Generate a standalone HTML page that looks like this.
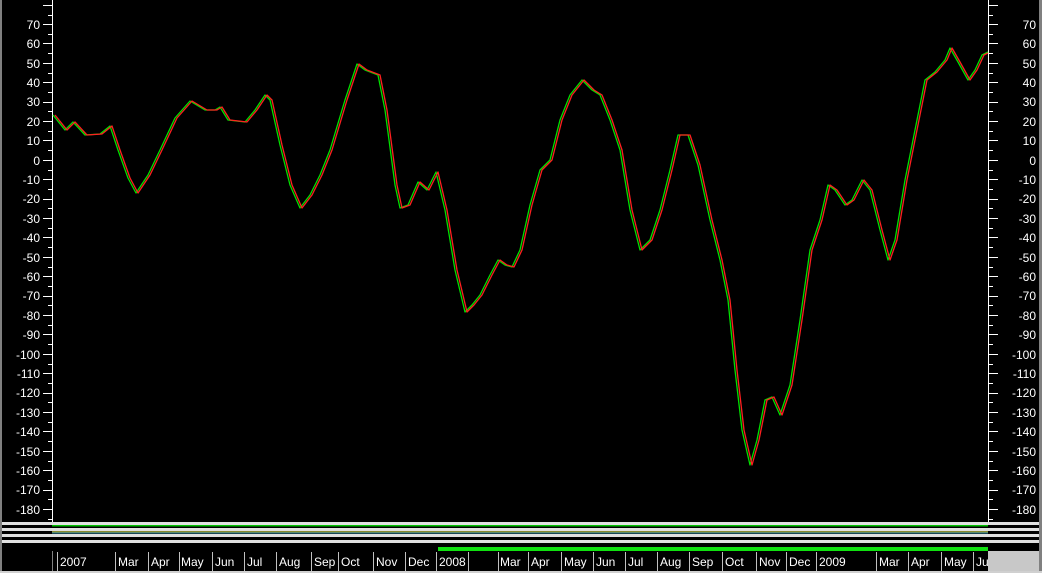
<!DOCTYPE html>
<html><head><style>
html,body{margin:0;padding:0;background:#000;}
svg{display:block;}
text{font-family:"Liberation Sans",Arial,sans-serif;font-size:12px;fill:#fff;}
</style></head><body>
<svg width="1042" height="573" viewBox="0 0 1042 573" xmlns="http://www.w3.org/2000/svg">
<rect width="1042" height="573" fill="#000"/>
<rect x="0" y="0" width="2" height="573" fill="#808080"/>
<rect x="1039" y="0" width="3" height="573" fill="#808080"/>
<line x1="52.5" y1="0" x2="52.5" y2="522" stroke="#fff"/>
<line x1="988.5" y1="0" x2="988.5" y2="522" stroke="#fff"/>
<g id="ticks" stroke="#fff">
<path d="M43 5.5H52M48 15.5H52M43 24.5H52M48 34.5H52M43 43.5H52M48 53.5H52M43 63.5H52M48 73.5H52M43 82.5H52M48 92.5H52M43 102.5H52M48 111.5H52M43 121.5H52M48 131.5H52M43 140.5H52M48 150.5H52M43 160.5H52M48 170.5H52M43 179.5H52M48 189.5H52M43 199.5H52M48 208.5H52M43 218.5H52M48 228.5H52M43 237.5H52M48 247.5H52M43 257.5H52M48 267.5H52M43 276.5H52M48 286.5H52M43 296.5H52M48 305.5H52M43 315.5H52M48 325.5H52M43 334.5H52M48 344.5H52M43 354.5H52M48 364.5H52M43 373.5H52M48 383.5H52M43 393.5H52M48 402.5H52M43 412.5H52M48 422.5H52M43 431.5H52M48 441.5H52M43 451.5H52M48 461.5H52M43 470.5H52M48 480.5H52M43 490.5H52M48 499.5H52M43 509.5H52M48 519.5H52"/>
<path transform="translate(1041,0) scale(-1,1)" d="M43 5.5H52M48 15.5H52M43 24.5H52M48 34.5H52M43 43.5H52M48 53.5H52M43 63.5H52M48 73.5H52M43 82.5H52M48 92.5H52M43 102.5H52M48 111.5H52M43 121.5H52M48 131.5H52M43 140.5H52M48 150.5H52M43 160.5H52M48 170.5H52M43 179.5H52M48 189.5H52M43 199.5H52M48 208.5H52M43 218.5H52M48 228.5H52M43 237.5H52M48 247.5H52M43 257.5H52M48 267.5H52M43 276.5H52M48 286.5H52M43 296.5H52M48 305.5H52M43 315.5H52M48 325.5H52M43 334.5H52M48 344.5H52M43 354.5H52M48 364.5H52M43 373.5H52M48 383.5H52M43 393.5H52M48 402.5H52M43 412.5H52M48 422.5H52M43 431.5H52M48 441.5H52M43 451.5H52M48 461.5H52M43 470.5H52M48 480.5H52M43 490.5H52M48 499.5H52M43 509.5H52M48 519.5H52"/>
</g>
<g text-anchor="end">
<text x="40" y="29">70</text><text x="40" y="48">60</text><text x="40" y="68">50</text><text x="40" y="87">40</text><text x="40" y="106">30</text><text x="40" y="126">20</text><text x="40" y="145">10</text><text x="40" y="165">0</text><text x="40" y="184">-10</text><text x="40" y="203">-20</text><text x="40" y="223">-30</text><text x="40" y="242">-40</text><text x="40" y="262">-50</text><text x="40" y="281">-60</text><text x="40" y="300">-70</text><text x="40" y="320">-80</text><text x="40" y="339">-90</text><text x="40" y="359">-100</text><text x="40" y="378">-110</text><text x="40" y="397">-120</text><text x="40" y="417">-130</text><text x="40" y="436">-140</text><text x="40" y="456">-150</text><text x="40" y="475">-160</text><text x="40" y="494">-170</text><text x="40" y="514">-180</text>
</g>
<g text-anchor="end">
<text x="1036" y="29">70</text><text x="1036" y="48">60</text><text x="1036" y="68">50</text><text x="1036" y="87">40</text><text x="1036" y="106">30</text><text x="1036" y="126">20</text><text x="1036" y="145">10</text><text x="1036" y="165">0</text><text x="1036" y="184">-10</text><text x="1036" y="203">-20</text><text x="1036" y="223">-30</text><text x="1036" y="242">-40</text><text x="1036" y="262">-50</text><text x="1036" y="281">-60</text><text x="1036" y="300">-70</text><text x="1036" y="320">-80</text><text x="1036" y="339">-90</text><text x="1036" y="359">-100</text><text x="1036" y="378">-110</text><text x="1036" y="397">-120</text><text x="1036" y="417">-130</text><text x="1036" y="436">-140</text><text x="1036" y="456">-150</text><text x="1036" y="475">-160</text><text x="1036" y="494">-170</text><text x="1036" y="514">-180</text>
</g>
<g fill="none" stroke-width="1.3" stroke-linejoin="round">
<polyline stroke="#00e000" points="53,115 65,130 73,122 85,135 100,134 110,126 118,150 128,178 136,193 148,175 160,150 175,118 190,101 205,110 215,110 220,107 228,120 245,122 255,110 265,95 270,100 280,145 290,185 300,208 310,195 320,175 330,150 345,100 357,64 365,70 378,75 385,110 395,185 400,208 408,205 418,182 427,190 436,172 445,210 455,270 465,312 472,305 480,295 490,275 498,260 505,265 512,267 520,250 530,205 540,170 550,160 560,120 570,95 582,80 592,90 600,95 610,120 620,150 630,210 640,250 650,240 660,210 670,170 678,135 688,135 698,165 710,220 720,260 728,300 735,370 742,430 750,465 757,440 765,400 772,397 780,415 790,385 800,320 810,250 820,220 828,185 835,190 845,205 852,200 862,180 870,190 880,230 888,260 895,240 905,180 915,130 925,80 935,72 945,60 950,48 958,62 968,80 975,70 982,55 988,52"/>
<polyline transform="translate(2,0)" stroke="#ff2020" points="53,115 65,130 73,122 85,135 100,134 110,126 118,150 128,178 136,193 148,175 160,150 175,118 190,101 205,110 215,110 220,107 228,120 245,122 255,110 265,95 270,100 280,145 290,185 300,208 310,195 320,175 330,150 345,100 357,64 365,70 378,75 385,110 395,185 400,208 408,205 418,182 427,190 436,172 445,210 455,270 465,312 472,305 480,295 490,275 498,260 505,265 512,267 520,250 530,205 540,170 550,160 560,120 570,95 582,80 592,90 600,95 610,120 620,150 630,210 640,250 650,240 660,210 670,170 678,135 688,135 698,165 710,220 720,260 728,300 735,370 742,430 750,465 757,440 765,400 772,397 780,415 790,385 800,320 810,250 820,220 828,185 835,190 845,205 852,200 862,180 870,190 880,230 888,260 895,240 905,180 915,130 925,80 935,72 945,60 950,48 958,62 968,80 975,70 982,55 986,53"/>
</g>
<rect x="2" y="522" width="1037" height="3" fill="#e0e0e0"/>
<rect x="52" y="525" width="936" height="1.5" fill="#00c000"/>
<rect x="2" y="528" width="1037" height="3" fill="#e0e0e0"/>
<rect x="52" y="531" width="936" height="1.5" fill="#8a8a30"/>
<rect x="52" y="532.5" width="936" height="1" fill="#3090b0"/>
<rect x="2" y="534" width="1037" height="3" fill="#e0e0e0"/>
<rect x="2" y="540" width="1037" height="3" fill="#e0e0e0"/>
<rect x="438" y="547" width="550" height="4" fill="#10e010"/>
<rect x="52" y="551" width="987" height="20" fill="#000"/>
<rect x="52" y="551" width="1" height="20" fill="#808080"/>
<rect x="988" y="551" width="51" height="20" fill="#c8c8c8"/>
<rect x="0" y="571" width="1042" height="2" fill="#d0d0d0"/>
<g stroke="#c0c0c0">
<path d="M57.5 552V571M115.5 552V571M148.5 552V571M179.5 552V571M212.5 552V571M244.5 552V571M276.5 552V571M311.5 552V571M338.5 552V571M373.5 552V571M405.5 552V571M436.5 552V571M468.5 552V571M498.5 552V571M528.5 552V571M561.5 552V571M593.5 552V571M625.5 552V571M657.5 552V571M689.5 552V571M722.5 552V571M756.5 552V571M786.5 552V571M816.5 552V571M876.5 552V571M908.5 552V571M941.5 552V571M973.5 552V571"/>
</g>
<g>
<text x="60" y="566">2007</text><text x="118" y="566">Mar</text><text x="151" y="566">Apr</text><text x="181" y="566">May</text><text x="215" y="566">Jun</text><text x="247" y="566">Jul</text><text x="279" y="566">Aug</text><text x="314" y="566">Sep</text><text x="341" y="566">Oct</text><text x="376" y="566">Nov</text><text x="408" y="566">Dec</text><text x="439" y="566">2008</text><text x="500" y="566">Mar</text><text x="531" y="566">Apr</text><text x="564" y="566">May</text><text x="596" y="566">Jun</text><text x="628" y="566">Jul</text><text x="660" y="566">Aug</text><text x="692" y="566">Sep</text><text x="725" y="566">Oct</text><text x="759" y="566">Nov</text><text x="789" y="566">Dec</text><text x="819" y="566">2009</text><text x="879" y="566">Mar</text><text x="911" y="566">Apr</text><text x="944" y="566">May</text><text x="976" y="566">Ju</text>
</g>
</svg>
</body></html>
